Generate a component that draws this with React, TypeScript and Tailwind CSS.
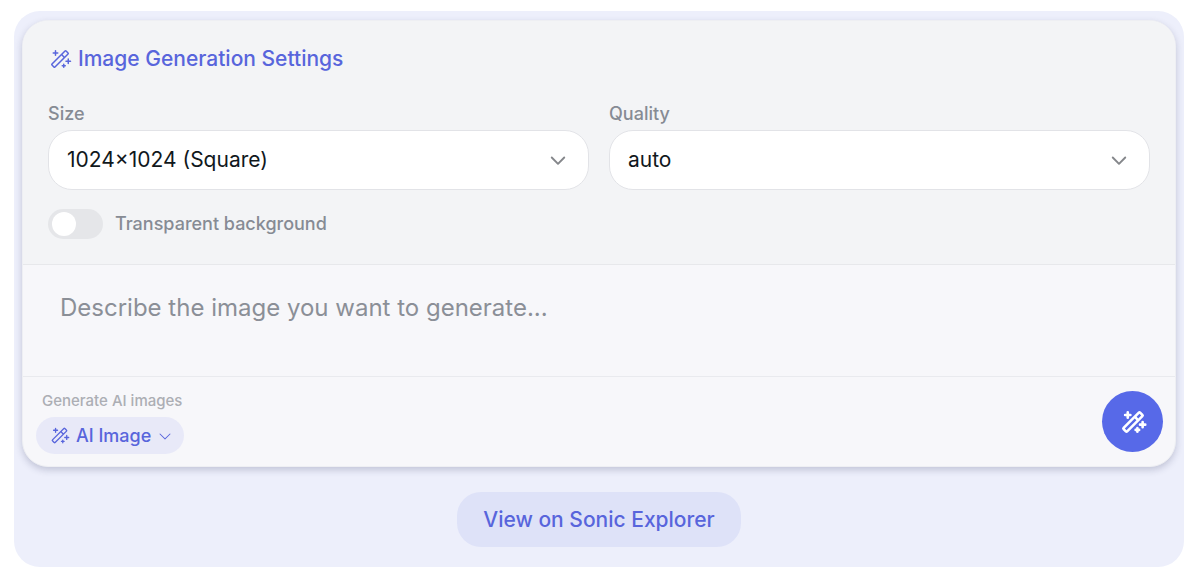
import React, { useState } from 'react'
import { PiCaretDown, PiCaretDownBold, PiMagicWand, PiMagicWandBold } from 'react-icons/pi'

const sizes = ['1024×1024 (Square)', '1536×1024 (Landscape)', '1024×1536 (Portrait)']
const qualities = ['auto', 'low', 'medium', 'high']

type SelectFieldProps = {
  id: string
  label: string
  options: string[]
}

function SelectField({ id, label, options }: SelectFieldProps) {
  return (
    <div className="flex-1 min-w-0">
      <label htmlFor={id} className="block text-lg leading-6 font-medium text-[#868b94]">
        {label}
      </label>
      <div className="relative mt-1">
        <select
          id={id}
          className="block w-full h-[60px] appearance-none rounded-3xl border border-[#e2e3e7] bg-white pl-[18px] pr-14 text-[21px] text-[#11181c]"
        >
          {options.map((option) => (
            <option key={option}>{option}</option>
          ))}
        </select>
        <PiCaretDownBold className="pointer-events-none absolute right-[21px] top-5 size-5 text-[#85878b]" />
      </div>
    </div>
  )
}

export default function App() {
  const [transparent, setTransparent] = useState(false)

  return (
    <div className="bg-white pt-[11px] pl-[14px] pr-4 pb-[9px] font-['Inter',sans-serif]">
      <main className="flex flex-col items-center rounded-[26px] bg-[#edeffb] pt-[9px] px-2 pb-5">
        <div className="w-full overflow-hidden rounded-[26px] border border-[#eeeff3] bg-[#f7f7fa] shadow-[0_3px_7px_rgba(40,45,90,0.22)]">
          <section className="border-b border-[#e7e8eb] bg-[#f3f4f6] px-[25px] pt-[22px] pb-[25px]">
            <h2 className="flex items-center gap-[6px] text-[21px] leading-8 font-medium text-[#5865dc]">
              <PiMagicWand className="size-6" />
              Image Generation Settings
            </h2>
            <div className="mt-[27px] flex gap-5">
              <SelectField id="size" label="Size" options={sizes} />
              <SelectField id="quality" label="Quality" options={qualities} />
            </div>
            <label className="mt-[19px] flex w-fit items-center gap-3 text-lg font-medium text-[#868b94]">
              <input
                type="checkbox"
                role="switch"
                checked={transparent}
                onChange={(e) => setTransparent(e.target.checked)}
                className="h-[30px] w-[55px] appearance-none rounded-full bg-[#e5e6e9] px-1 py-[3px] before:block before:size-6 before:rounded-full before:bg-white checked:bg-[#5865e8] checked:before:translate-x-[23px]"
              />
              Transparent background
            </label>
          </section>

          <textarea
            aria-label="Image description"
            placeholder="Describe the image you want to generate..."
            className="block h-28 w-full resize-none border-b border-[#e9eaee] px-[37px] pt-[25px] text-2xl leading-9 text-[#11181c] outline-none placeholder:text-[#8b8f97]"
          />

          <footer className="flex items-center justify-between pl-[13px] pr-3 pt-3 pb-3">
            <div>
              <p className="pl-[6px] text-[15px] leading-6 font-medium text-[#acaeb4]">Generate AI images</p>
              <button className="mt-1 flex h-[37px] items-center gap-[6px] rounded-full bg-[#e8e9f8] pl-[13px] pr-[11px] text-lg font-medium text-[#5865dc]">
                <PiMagicWand className="size-[21px]" />
                AI Image
                <PiCaretDown className="size-4" />
              </button>
            </div>
            <button
              aria-label="Generate"
              className="flex size-[61px] items-center justify-center rounded-full bg-[#5769e8] text-white"
            >
              <PiMagicWandBold className="size-7" />
            </button>
          </footer>
        </div>

        <a
          href="#explorer"
          className="mt-[25px] flex h-[55px] items-center rounded-3xl bg-[#dee2f8] px-[26px] text-[21px] font-medium text-[#5865dc]"
        >
          View on Sonic Explorer
        </a>
      </main>
    </div>
  )
}
